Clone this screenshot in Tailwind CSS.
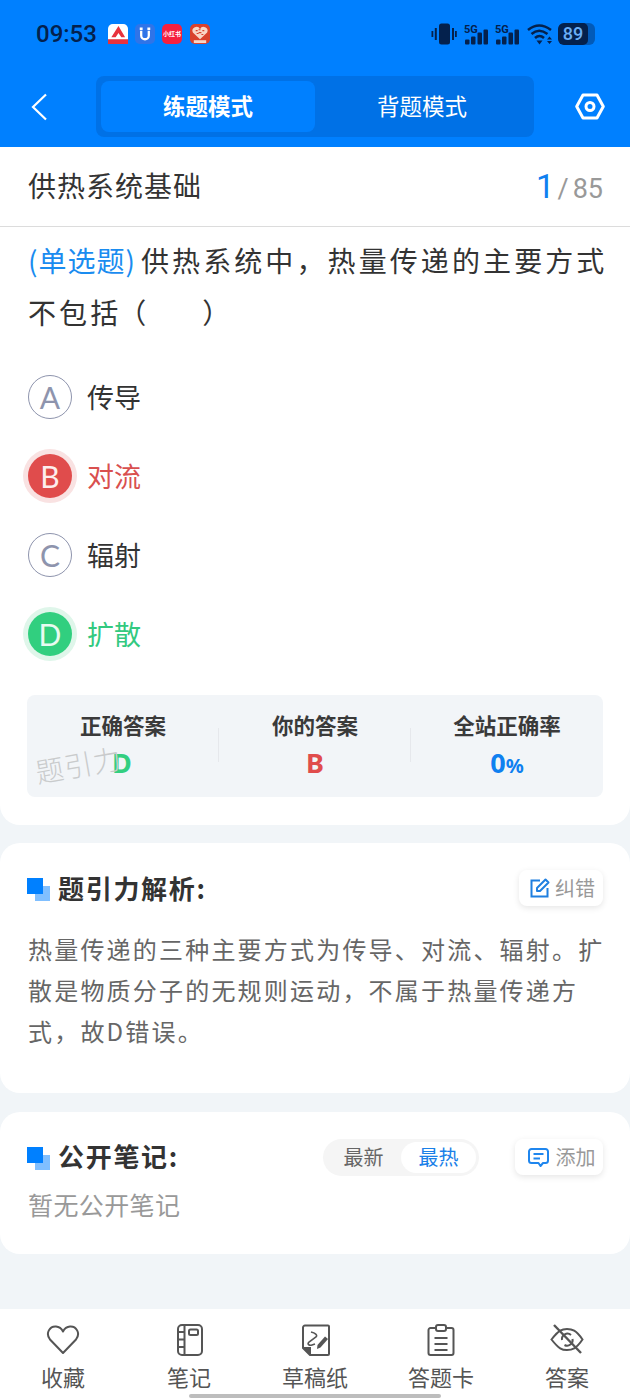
<!DOCTYPE html>
<html lang="zh">
<head>
<meta charset="utf-8">
<script src="https://cdn.jsdelivr.net/npm/@tailwindcss/browser@4"></script>
</head>
<body class="m-0">
<div class="relative w-[630px] h-[1400px] overflow-hidden bg-[#f1f5f8] flex flex-col font-['Noto_Sans_CJK_SC','Noto_Sans',sans-serif]">

  <!-- Header -->
  <header class="h-[147px] bg-[#0080ff] shrink-0 flex flex-col">
    <div class="h-[76px] flex items-start pl-[36px] pt-[20px]">
      <div class="flex items-center h-[28px]">
        <span class="font-['Roboto'] font-medium text-[24px] text-[#04214d] leading-none w-[72px]">09:53</span>
        <div class="flex items-center gap-[7px]">
          <svg width="20" height="20" viewBox="0 0 21 21"><rect width="21" height="21" rx="5" fill="#fff"/><path d="M11 2 L18 14 H14 L11 9.500 L8 14 H3.500 Z" fill="#e8323c"/><rect x="0" y="16" width="21" height="5" fill="#e8323c"/></svg>
          <svg width="20" height="20" viewBox="0 0 21 21"><rect width="21" height="21" rx="5" fill="#2f74e8"/><path d="M6.500 7 V12 a4 4 0 0 0 8 0 V7 M5 5 h3 M13 5 h3" stroke="#fff" stroke-width="2.400" fill="none"/></svg>
          <div class="w-[20px] h-[20px] rounded-[5px] bg-[#f5203f] flex items-center justify-center overflow-hidden text-white text-[6px] font-bold leading-none whitespace-nowrap">小红书</div>
          <svg width="20" height="20" viewBox="0 0 21 21" class="ml-[1px]"><rect width="21" height="21" rx="5" fill="#d9412c"/><path d="M10.500 16 L3 9 a3.800 3.800 0 0 1 7.500 -3.500 a3.800 3.800 0 0 1 7.500 3.500 Z" fill="#f8d6c6"/><path d="M6 7h2M9 9h3M13 7h2M7 10h2M12 11h2M9 6h2" stroke="#d9412c" stroke-width="1.200"/><rect x="4" y="17" width="13" height="3" fill="#f8d6c6"/></svg>
        </div>
      </div>
      <div class="ml-auto mr-[35px] flex items-center h-[28px]">
        <svg width="26" height="22" viewBox="0 0 26 22" fill="#04214d"><rect x="8" y="0.500" width="11" height="21" rx="2.500"/><rect x="0.500" y="8" width="1.800" height="6"/><rect x="3.800" y="5" width="2" height="12"/><rect x="21" y="5" width="2" height="12"/><rect x="24" y="8" width="1.800" height="6"/></svg>
        <svg width="26" height="22" viewBox="0 0 26 22" fill="#04214d" class="ml-[6px]"><text x="1" y="9.500" font-size="11" font-weight="700" font-family="Roboto">5G</text><rect x="2" y="16.500" width="4.500" height="5" rx="1"/><rect x="8" y="13.500" width="4.500" height="8" rx="1"/><rect x="14.500" y="9.500" width="4.500" height="12" rx="1"/><rect x="20.500" y="6.500" width="4.500" height="15" rx="1"/></svg>
        <svg width="26" height="22" viewBox="0 0 26 22" fill="#04214d" class="ml-[5px]"><text x="1" y="9.500" font-size="11" font-weight="700" font-family="Roboto">5G</text><rect x="2" y="16.500" width="4.500" height="5" rx="1"/><rect x="8" y="13.500" width="4.500" height="8" rx="1"/><rect x="14.500" y="9.500" width="4.500" height="12" rx="1"/><rect x="20.500" y="6.500" width="4.500" height="15" rx="1"/></svg>
        <svg width="26" height="22" viewBox="0 0 26 22" fill="none" stroke="#04214d" stroke-width="2.600" class="ml-[7px]"><path d="M1 7 Q12 -2 24 7"/><path d="M4.500 11 Q12 4.500 20.500 11"/><path d="M8 15 Q12.500 11 17 15"/><path d="M9.500 17.500 h6 l-3 4 Z" fill="#04214d" stroke="none"/><path d="M22.500 13.500 l2.500 3 h-5 Z M20 18 h5 l-2.500 3 Z" fill="#04214d" stroke="none"/></svg>
        <div class="ml-[5px] w-[37px] h-[22px] rounded-[6px] bg-[#04214d]/40 overflow-hidden">
          <div class="w-[30px] ml-0 h-[22px] bg-[#04214d] rounded-[5px] flex items-center justify-center font-['Roboto'] font-medium text-[18px] leading-none text-[#6aaef7]">89</div>
        </div>
      </div>
    </div>
    <div class="flex items-start pl-[31px]">
      <svg width="16" height="28" viewBox="0 0 16 28" fill="none" stroke="#fff" stroke-width="2.200" class="mt-[17px]"><path d="M15 1.500 L2 14 L15 26.500"/></svg>
      <div class="ml-[49px] w-[438px] h-[61px] rounded-[8px] bg-[#0071e6] p-[5px] flex">
        <div class="w-[214px] h-[51px] pb-[3px] rounded-[8px] bg-[#0080ff] flex items-center justify-center text-white font-bold text-[22.500px] leading-none">练题模式</div>
        <div class="flex-1 pb-[3px] flex items-center justify-center text-white text-[22.500px] leading-none">背题模式</div>
      </div>
      <svg width="30" height="27" viewBox="0 0 30 27" fill="none" stroke="#fff" stroke-width="3" class="ml-[41px] mt-[17px]"><path d="M8 2 H22 L28.300 13.500 L22 25 H8 L1.700 13.500 Z" stroke-linejoin="round"/><circle cx="15" cy="13.500" r="4"/></svg>
    </div>
  </header>

  <!-- Main question card -->
  <section class="h-[678px] shrink-0 bg-white rounded-b-[20px] flex flex-col">
    <div class="h-[80px] shrink-0 border-b border-[#dcdcdc] pl-[28px] pr-[27px] pb-[3px] flex items-center justify-between">
      <span class="text-[28px] tracking-[1px] text-[#333] leading-none">供热系统基础</span>
      <span class="flex items-baseline font-['Roboto'] leading-none mt-[3px]"><span class="text-[33px] text-[#0f80f0]">1</span><span class="text-[27px] text-[#999] ml-[3px]">/</span><span class="text-[27px] text-[#999] ml-[4px]">85</span></span>
    </div>
    <p class="ml-[28px] mr-[22px] mt-[7px] text-[28px] leading-[52px] tracking-[3.100px] text-[#333]"><span class="text-[#1a8cf0] tracking-[1px] mr-[5px]">(单选题)</span>供热系统中，热量传递的主要方式不包括<span class="tracking-[0px] -ml-[3px]">（　　）</span></p>

    <div class="mx-[28px] mt-[37px] flex flex-col gap-[35px]">
      <div class="flex items-center h-[44px] gap-[15px]">
        <div class="w-[44px] h-[44px] rounded-full border-[1.500px] border-[#8e94ad] flex items-center justify-center font-['Lato'] text-[30px] text-[#8e94ad]">A</div>
        <span class="text-[27px] text-[#333]">传导</span>
      </div>
      <div class="flex items-center h-[44px] gap-[15px]">
        <div class="w-[44px] h-[44px] rounded-full bg-[#e04c4c] ring-[5px] ring-[#f9e2e2] flex items-center justify-center font-['Lato'] text-[30px] text-[#fdeeee]">B</div>
        <span class="text-[27px] text-[#d9504f]">对流</span>
      </div>
      <div class="flex items-center h-[44px] gap-[15px]">
        <div class="w-[44px] h-[44px] rounded-full border-[1.500px] border-[#8e94ad] flex items-center justify-center font-['Lato'] text-[30px] text-[#8e94ad]">C</div>
        <span class="text-[27px] text-[#333]">辐射</span>
      </div>
      <div class="flex items-center h-[44px] gap-[15px]">
        <div class="w-[44px] h-[44px] rounded-full bg-[#31cf7f] ring-[5px] ring-[#dff6ea] flex items-center justify-center font-['Lato'] text-[30px] text-[#e8fbf1]">D</div>
        <span class="text-[27px] text-[#33c97f]">扩散</span>
      </div>
    </div>

    <div class="relative ml-[27px] w-[576px] mt-[39px] h-[102px] rounded-[8px] bg-[#f2f5f8] grid grid-cols-3 pt-[15px]">
      <div class="relative flex flex-col items-center">
        <span class="text-[21.500px] font-bold text-[#3a3a3a] leading-[30px]">正确答案</span>
        <span class="font-['Noto_Sans'] text-[27px] font-bold text-[#33cf80] leading-[36px] mt-[5px] -ml-[2px]">D</span>
        <div class="absolute right-0 top-[18px] h-[34px] w-px bg-[#e6e8ec]"></div>
      </div>
      <div class="relative flex flex-col items-center">
        <span class="text-[21.500px] font-bold text-[#3a3a3a] leading-[30px]">你的答案</span>
        <span class="font-['Noto_Sans'] text-[27px] font-bold text-[#e04c4c] leading-[36px] mt-[5px]">B</span>
        <div class="absolute right-0 top-[18px] h-[34px] w-px bg-[#e6e8ec]"></div>
      </div>
      <div class="flex flex-col items-center">
        <span class="text-[21.500px] font-bold text-[#3a3a3a] leading-[30px]">全站正确率</span>
        <span class="font-['Noto_Sans'] font-bold text-[#0f80f0] leading-[36px] mt-[5px]"><span class="text-[27px]">0</span><span class="text-[20px]">%</span></span>
      </div>
      <span class="absolute left-[8px] top-[55px] text-[28px] leading-none tracking-[1px] text-[#c9cbcc] -rotate-[10deg] font-light">题引力</span>
    </div>
  </section>

  <!-- Analysis card -->
  <section class="mt-[18px] h-[250px] shrink-0 bg-white rounded-[20px] pl-[27px] pr-[27px] pt-[27px]">
    <div class="flex items-center justify-between h-[36px]">
      <div class="flex items-center">
        <div class="relative w-[23px] h-[23px] mt-[2px]">
          <div class="absolute right-0 bottom-0 w-[15px] h-[15px] bg-[#80bfff]"></div>
          <div class="absolute left-0 top-0 w-[16px] h-[16px] bg-[#0080ff]"></div>
        </div>
        <h2 class="ml-[8px] text-[26px] font-bold tracking-[1.700px] text-[#333] leading-none">题引力解析:</h2>
      </div>
      <div class="w-[84px] h-[36px] pl-[3px] rounded-[8px] bg-white shadow-[0_2px_6px_rgba(0,0,0,0.1)] flex items-center justify-center gap-[5px]">
        <svg width="20" height="20" viewBox="0 0 20 20" fill="none" stroke="#1f7fe0" stroke-width="2"><path d="M10 2.500 H1.500 V18.500 H17.500 V10"/><path d="M7 13 V10 L15.500 1.500 L18.500 4.500 L10 13 Z" stroke-linejoin="round"/></svg>
        <span class="text-[20px] text-[#999] leading-none">纠错</span>
      </div>
    </div>
    <p class="ml-[1px] -mr-[3px] mt-[22px] text-[24px] leading-[41px] tracking-[2.200px] text-[#666]">热量传递的三种主要方式为传导、对流、辐射。扩散是物质分子的无规则运动，不属于热量传递方式，故D错误。</p>
  </section>

  <!-- Notes card -->
  <section class="mt-[19px] h-[142px] shrink-0 bg-white rounded-[20px] pl-[27px] pr-[27px] pt-[27px]">
    <div class="flex items-center h-[36px]">
      <div class="relative w-[23px] h-[23px] mt-[2px]">
        <div class="absolute right-0 bottom-0 w-[15px] h-[15px] bg-[#80bfff]"></div>
        <div class="absolute left-0 top-0 w-[16px] h-[16px] bg-[#0080ff]"></div>
      </div>
      <h2 class="ml-[8px] -mt-[2px] text-[26px] font-bold tracking-[1.700px] text-[#333] leading-none">公开笔记:</h2>
      <div class="ml-auto w-[156px] h-[37px] rounded-full bg-[#f5f5f5] p-[3px] flex items-center">
        <span class="w-[75px] text-center text-[20px] text-[#666] leading-none">最新</span>
        <span class="w-[75px] h-[31px] rounded-full bg-white flex items-center justify-center text-[20px] text-[#1a80e8] leading-none">最热</span>
      </div>
      <div class="ml-[36px] w-[88px] h-[36px] pl-[5px] rounded-[8px] bg-white shadow-[0_2px_6px_rgba(0,0,0,0.1)] flex items-center justify-center gap-[7px]">
        <svg width="21" height="19" viewBox="0 0 21 19" fill="none" stroke="#1f86ee" stroke-width="2"><path d="M3.500 1 H17.500 a2.500 2.500 0 0 1 2.500 2.500 V12.500 a2.500 2.500 0 0 1 -2.500 2.500 H15 L12.500 18 L10.500 15 H3.500 a2.500 2.500 0 0 1 -2.500 -2.500 V3.500 a2.500 2.500 0 0 1 2.500 -2.500 Z" stroke-linejoin="round"/><path d="M5.500 6 H15.500 M5.500 10.500 H12"/></svg>
        <span class="text-[20px] text-[#999] leading-none">添加</span>
      </div>
    </div>
    <p class="ml-[1px] mt-[11px] text-[25px] leading-[36px] tracking-[0.400px] text-[#999]">暂无公开笔记</p>
  </section>

  <!-- Bottom nav -->
  <nav class="mt-auto h-[91px] shrink-0 bg-white grid grid-cols-5 text-[#555]">
    <div class="flex flex-col items-center pt-[15px]">
      <svg width="34" height="32" viewBox="0 0 34 32" fill="none" stroke="#555" stroke-width="2"><path d="M17 29 L4 15.500 C-1 9 4 2 10 2.500 C13 2.700 15.500 4.500 17 7.500 C18.500 4.500 21 2.700 24 2.500 C30 2 35 9 30 15.500 Z" stroke-linejoin="round"/></svg>
      <span class="mt-[5px] text-[22px] leading-[30px]">收藏</span>
    </div>
    <div class="flex flex-col items-center pt-[15px]">
      <svg width="28" height="32" viewBox="0 0 28 32" fill="none" stroke="#555" stroke-width="2" class="mr-[-1px]"><rect x="2" y="1" width="24" height="30" rx="4"/><path d="M8.500 1 V31 M2 8 H8.500 M2 15.500 H8.500 M2 23 H8.500"/><rect x="13" y="5.500" width="9" height="5.500" rx="1.500"/></svg>
      <span class="mt-[5px] text-[22px] leading-[30px]">笔记</span>
    </div>
    <div class="flex flex-col items-center pt-[15px]">
      <svg width="30" height="32" viewBox="0 0 30 32" fill="none" stroke="#555" stroke-width="2" class="mr-[-1px]"><path d="M4 1.500 H27 a1 1 0 0 1 1 1 V30 a1 1 0 0 1 -1 1 H9 L2 24 V3.500 a2 2 0 0 1 2 -2 Z" stroke-linejoin="round"/><path d="M2 24 H9 V31" fill="#555"/><path d="M10 8 C14 9 17 11 15 13 L8 18 C6 20 8 22 11 21 L14 20" stroke-width="1.600"/><path d="M16 25 L16.500 21 L24 12.500 L27 15 L19.500 23.500 Z" fill="#555" stroke="none"/></svg>
      <span class="mt-[5px] text-[22px] leading-[30px]">草稿纸</span>
    </div>
    <div class="flex flex-col items-center pt-[15px]">
      <svg width="28" height="32" viewBox="0 0 28 32" fill="none" stroke="#555" stroke-width="2"><path d="M9 4 H3.500 a2 2 0 0 0 -2 2 V29 a2 2 0 0 0 2 2 H24.500 a2 2 0 0 0 2 -2 V6 a2 2 0 0 0 -2 -2 H19"/><rect x="9" y="1" width="10" height="6" rx="2"/><path d="M7.500 14 H20.500 M7.500 20 H20.500 M7.500 26 H20.500"/></svg>
      <span class="mt-[5px] text-[22px] leading-[30px]">答题卡</span>
    </div>
    <div class="flex flex-col items-center pt-[15px]">
      <svg width="34" height="32" viewBox="0 0 34 32" fill="none" stroke="#555" stroke-width="2"><path d="M1.500 15.500 C9 6 12 5 17 5 C22 5 26 6 32.500 15.500 C26 25 22 26 17 26 C12 26 9 25 1.500 15.500 Z"/><path d="M12 16 a5.500 5.500 0 0 1 9 -5 M22.500 15 a5.500 5.500 0 0 1 -8 6"/><path d="M4 1 L31 29" stroke-width="2.400"/></svg>
      <span class="mt-[5px] text-[22px] leading-[30px]">答案</span>
    </div>
  </nav>
  <div class="absolute left-[189px] bottom-[2px] w-[252px] h-[4px] rounded-full bg-[#bdbdbd]"></div>
</div>
</body>
</html>
